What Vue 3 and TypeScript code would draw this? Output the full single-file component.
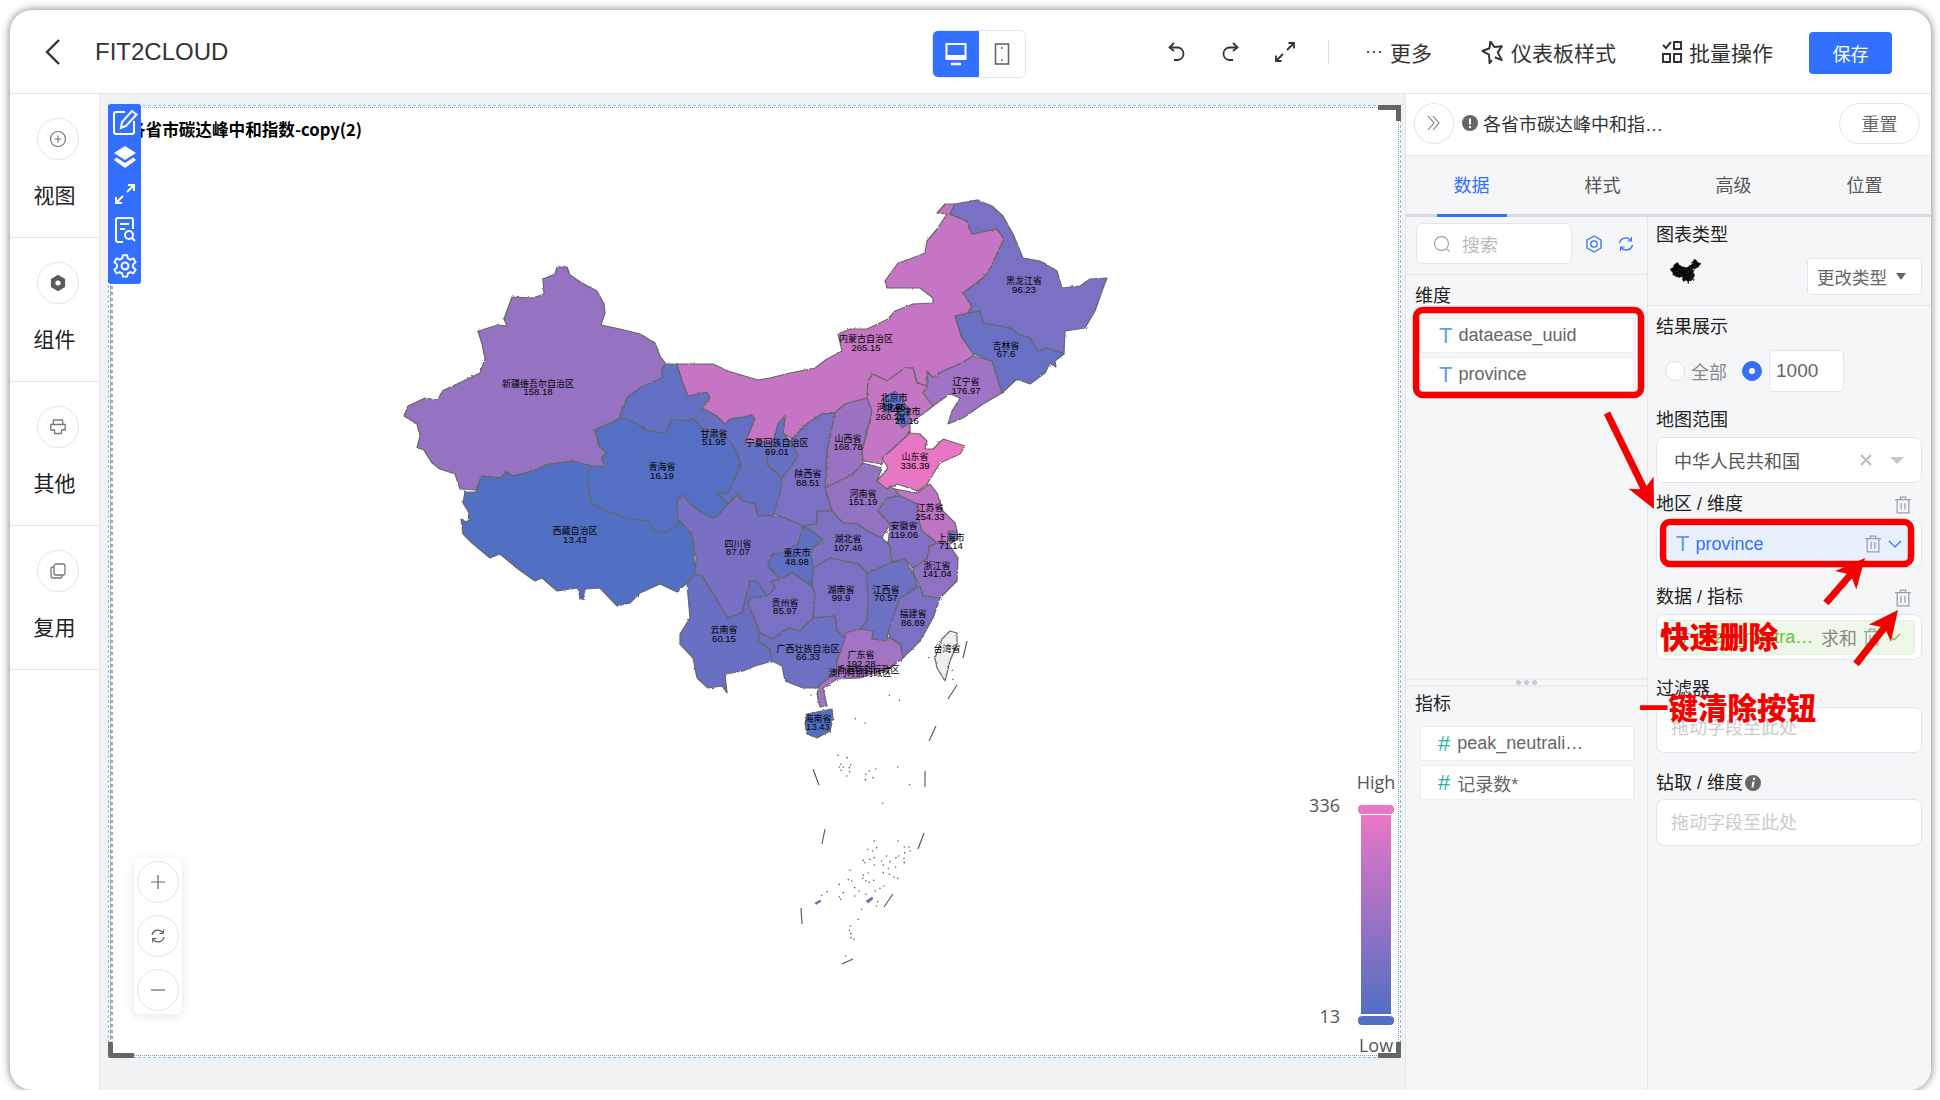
<template>
  <div class="window">
    <header class="topbar">
      <div class="topbar-left">
        <svg class="back" viewBox="0 0 16 26"><path d="M14 1 2 13l12 12" /></svg>
        <span class="app-title">FIT2CLOUD</span>
      </div>
      <div class="device-switch">
        <div class="device active">
          <svg width="24" height="24" viewBox="0 0 24 24" fill="none" stroke="#fff" stroke-width="2">
            <rect x="2.5" y="2" width="19" height="15" />
            <path d="M3 14.5h18" stroke-width="3" />
            <path d="M7 22h10" stroke-width="2.4" />
          </svg>
        </div>
        <div class="device">
          <svg width="18" height="24" viewBox="0 0 18 24" fill="none" stroke="#666" stroke-width="1.6">
            <rect x="2.5" y="2" width="13" height="20" />
            <circle cx="9" cy="6" r="1" fill="#666" stroke="none" />
            <circle cx="9" cy="18" r="1" fill="#666" stroke="none" />
          </svg>
        </div>
      </div>
      <svg class="tool first" viewBox="0 0 24 24"><path d="M9 3 4.5 7.5 9 11" /><path d="M5 7.5h8a6.3 6.3 0 0 1 0 12.5H9" /></svg>
      <svg class="tool" viewBox="0 0 24 24"><path d="M15 3l4.5 4.500L15 11" /><path d="M19 7.5h-8a6.3 6.3 0 0 0 0 12.5h4" /></svg>
      <svg class="tool wide" viewBox="0 0 24 24"><path d="M14 10 21 3M15.5 3H21v5.5M10 14l-7 7M8.5 21H3v-5.5" /></svg>
      <i class="top-divider"></i>
      <span class="action more"><b class="dots">···</b>更多</span>
      <span class="action style">
        <svg width="24" height="26" viewBox="0 0 24 26" fill="none" stroke="#333" stroke-width="2" stroke-linejoin="round">
          <g transform="rotate(-14 12 13)">
            <path d="M12 2l2.5 6.5L22 9.5l-5.5 5 2 8.5-6-4.5" />
            <path d="M9 20.5l-3 2.5 1.5-8.5L2 9.5l7.5-1L12 2" />
          </g>
        </svg>
        仪表板样式
      </span>
      <span class="action batch">
        <svg width="20" height="24" viewBox="0 0 20 24" fill="none" stroke="#333" stroke-width="2">
          <path d="M1 5l3 3 5-6" />
          <rect x="12" y="2" width="7" height="7" />
          <rect x="1" y="14" width="7" height="8" />
          <rect x="12" y="14" width="7" height="8" />
        </svg>
        批量操作
      </span>
      <button class="save">保存</button>
    </header>

    <div class="body">
      <aside class="sidebar">
        <div v-for="item in navItems" :key="item.key" class="nav-item">
          <div class="nav-circle">
            <svg v-if="item.key === 'view'" width="18" height="18" viewBox="0 0 18 18" fill="none" stroke="#777" stroke-width="1.2">
              <circle cx="9" cy="9" r="7.5" /><path d="M9 5.5v7M5.5 9h7" />
            </svg>
            <svg v-else-if="item.key === 'widget'" width="18" height="18" viewBox="0 0 18 18" fill="none" stroke="#5a5a5a" stroke-width="4.6">
              <path d="M9 3.5l4.800 2.750v5.500L9 14.500l-4.800-2.750v-5.500z" />
            </svg>
            <svg v-else-if="item.key === 'other'" width="18" height="18" viewBox="0 0 18 18" fill="none" stroke="#777" stroke-width="1.3" stroke-linejoin="round">
              <path d="M4 6.5 4.500 2h9l.5 4.500" />
              <path d="M1.800 6.500h14.400v5.500h-3.700v3.500h-7v-3.500H1.800z" />
            </svg>
            <svg v-else width="18" height="18" viewBox="0 0 18 18" fill="none" stroke="#777" stroke-width="1.3">
              <rect x="5" y="2" width="11" height="11" rx="2" />
              <path d="M5 5H4a2 2 0 0 0-2 2v7a2 2 0 0 0 2 2h7a2 2 0 0 0 2-2v-1" />
            </svg>
          </div>
          <span class="nav-label">{{ item.label }}</span>
        </div>
      </aside>

      <main class="canvas">
        <section class="chart">
          <div class="chart-title">各省市碳达峰中和指数-copy(2)</div>

          <svg class="map" viewBox="400 190 720 780" width="720" height="780">
            <filter id="rough" filterUnits="userSpaceOnUse" x="400" y="190" width="720" height="780">
              <feTurbulence type="fractalNoise" baseFrequency="0.3" numOctaves="2" seed="4" result="noise" />
              <feDisplacementMap in="SourceGraphic" in2="noise" scale="2.4" />
            </filter>
            <g filter="url(#rough)" stroke="#666" stroke-width="1.2" stroke-linejoin="round">
              <polygon v-for="p in provinces" :key="p.name" :points="p.pts" :fill="p.fill" />
            </g>
            <g stroke="#555" stroke-width="1.1" fill="none">
              <line v-for="(d, i) in dashes" :key="i" :x1="d[0]" :y1="d[1]" :x2="d[2]" :y2="d[3]" />
            </g>
            <circle v-for="(d, i) in dots" :key="'dot' + i" :cx="d[0]" :cy="d[1]" r="0.8" fill="#666" />
            <path d="M866 900l6-4 1 2-5 4zM815 902l5-3 1 1.500-5 3z" fill="#5a70c0" stroke="#666" stroke-width="0.5" />
            <g v-for="l in labels" :key="l.name" class="map-label">
              <text class="map-name" :x="l.x" :y="l.y + 3">{{ l.name }}</text>
              <text v-if="l.value" class="map-value" :x="l.x" :y="l.y2 + 3">{{ l.value }}</text>
            </g>
          </svg>

          <div class="toolbar">
            <svg width="26" height="28" viewBox="0 0 26 28" fill="none" stroke="#fff" stroke-width="2">
              <path d="M13 4H4a2 2 0 0 0-2 2v18a2 2 0 0 0 2 2h16a2 2 0 0 0 2-2V13" />
              <path d="M9 20l1-6L20 3l4.500 3.500L14 18z" />
            </svg>
            <svg width="26" height="26" viewBox="0 0 26 26" fill="#fff">
              <path d="M13 1l11 7-11 7L2 8z" />
              <path d="M4.500 12.500 13 18l8.500-5.500L24 15l-11 8L2 15z" />
            </svg>
            <svg width="24" height="24" viewBox="0 0 24 24" fill="none" stroke="#fff" stroke-width="2">
              <path d="M14 10l7-7M15 3h6v6M10 14l-7 7M3 15v6h6" />
            </svg>
            <svg width="24" height="28" viewBox="0 0 24 28" fill="none" stroke="#fff" stroke-width="2">
              <path d="M10 26H5a2 2 0 0 1-2-2V4a2 2 0 0 1 2-2h13a2 2 0 0 1 2 2v9" />
              <path d="M7 8h9M7 13h5" />
              <circle cx="16" cy="19" r="4" /><path d="M19 22l3 3" />
            </svg>
            <svg width="26" height="28" viewBox="0 0 24 24" fill="none" stroke="#fff" stroke-width="1.8" stroke-linejoin="round">
              <circle cx="12" cy="12" r="3.2" />
              <path d="M10 2h4l.6 3 2.400 1.200 2.800-1.200 2 3.500-2.300 2v2.800l2.300 2-2 3.500-2.800-1.200-2.400 1.200-.6 3h-4l-.6-3L7 17.600l-2.800 1.200-2-3.500 2.300-2v-2.800l-2.300-2 2-3.500L7 6.200 9.400 5z" />
            </svg>
          </div>

          <i class="corner tr"></i>
          <i class="corner bl"></i>
          <i class="corner br"></i>

          <div class="zoom-box">
            <span class="zoom-btn">
              <svg width="16" height="16" viewBox="0 0 16 16" stroke="#666" stroke-width="1.2"><path d="M8 1v14M1 8h14" /></svg>
            </span>
            <span class="zoom-btn">
              <svg width="16" height="16" viewBox="0 0 16 16" fill="none" stroke="#666" stroke-width="1.3">
                <path d="M2 7a6 6 0 0 1 11-2M14 9a6 6 0 0 1-11 2" />
                <path d="M13.5 1.5V5.5H9.5M2.5 14.5V10.5H6.5" stroke-width="1" />
              </svg>
            </span>
            <span class="zoom-btn">
              <svg width="16" height="16" viewBox="0 0 16 16" stroke="#666" stroke-width="1.2"><path d="M1 8h14" /></svg>
            </span>
          </div>

          <div class="legend">
            <span class="legend-cap">High</span>
            <div class="legend-main">
              <div class="legend-values"><span>336</span><span>13</span></div>
              <div class="legend-bar">
                <i class="handle top"></i>
                <i class="ramp"></i>
                <i class="handle bottom"></i>
              </div>
            </div>
            <span class="legend-cap low">Low</span>
          </div>
        </section>
      </main>

      <aside class="panel">
        <div class="panel-head">
          <span class="collapse">
            <svg width="16" height="18" viewBox="0 0 16 18" fill="none" stroke="#777" stroke-width="1.1"><path d="M2 2l6 7-6 7M7 2l6 7-6 7" /></svg>
          </span>
          <svg class="warn" width="16" height="16" viewBox="0 0 16 16">
            <circle cx="8" cy="8" r="8" fill="#666" /><path d="M8 3.5v6" stroke="#fff" stroke-width="2" /><circle cx="8" cy="12" r="1.2" fill="#fff" />
          </svg>
          <span class="panel-title">各省市碳达峰中和指…</span>
          <button class="reset">重置</button>
        </div>

        <nav class="tabs">
          <span v-for="(t, i) in tabs" :key="t" class="tab" :class="{ active: i === 0 }">{{ t }}</span>
        </nav>

        <div class="panel-cols">
          <div class="col-fields">
            <div class="fields-upper">
              <div class="search-row">
                <div class="search">
                  <svg width="18" height="18" viewBox="0 0 18 18" fill="none" stroke="#aaa" stroke-width="1.3"><circle cx="8.5" cy="8.5" r="7" /><path d="M13.5 13.5l3 3" /></svg>
                  <span>搜索</span>
                </div>
                <svg class="search-gear" width="18" height="18" viewBox="0 0 18 18" fill="none" stroke="#3370ff" stroke-width="1.3">
                  <path d="M9 1l7 4v8l-7 4-7-4V5z" stroke-linejoin="round" /><circle cx="9" cy="9" r="3.2" />
                </svg>
                <svg class="search-sync" width="16" height="16" viewBox="0 0 16 16" fill="none" stroke="#3370ff" stroke-width="1.4">
                  <path d="M1.5 7a6.5 6.5 0 0 1 11.5-2.5M14.5 9A6.5 6.5 0 0 1 3 11.5" />
                  <path d="M13.5 1v4h-4M2.5 15v-4h4" stroke-width="1.1" />
                </svg>
              </div>
              <div class="col-label">维度</div>
              <div class="field-list">
                <div v-for="f in dimensions" :key="f" class="field"><em class="type-t">T</em>{{ f }}</div>
              </div>
            </div>
            <div class="splitter"><i></i><i></i><i></i></div>
            <div class="col-label measure-label">指标</div>
            <div class="field-list">
              <div v-for="f in measures" :key="f" class="field"><em class="type-n">#</em>{{ f }}</div>
            </div>
          </div>

          <div class="col-config">
            <div class="config-top">
              <div class="cfg-label">图表类型</div>
              <div class="chart-type">
                <svg class="mini-map" width="31" height="25" viewBox="400 190 710 555" preserveAspectRatio="none">
                  <polygon v-for="p in provinces" :key="p.name" :points="p.pts" fill="#000" stroke="#000" stroke-width="6" />
                </svg>
                <div class="type-select">更改类型<i class="caret"></i></div>
              </div>
            </div>

            <div class="config-rest">
              <div class="cfg-label">结果展示</div>
              <div class="result-row">
                <i class="radio"></i><span class="radio-text">全部</span>
                <i class="radio on"></i>
                <div class="num-input">1000</div>
              </div>

              <div class="cfg-label l-range">地图范围</div>
              <div class="range-select">
                <span>中华人民共和国</span>
                <svg width="12" height="12" viewBox="0 0 12 12" stroke="#bbb" stroke-width="2"><path d="M1 1l10 10M11 1 1 11" /></svg>
                <i class="caret light"></i>
              </div>

              <div class="cfg-label l-region">地区 / 维度<TrashIcon class="label-trash" /></div>
              <div class="drop drop-region">
                <div class="chip chip-blue">
                  <em class="type-t">T</em><span class="chip-text">province</span>
                  <TrashIcon />
                  <svg class="chev" width="14" height="8" viewBox="0 0 14 8" fill="none" stroke="#3370ff" stroke-width="1.2"><path d="M1 1l6 6 6-6" /></svg>
                </div>
              </div>

              <div class="cfg-label l-measure">数据 / 指标<TrashIcon class="label-trash" /></div>
              <div class="drop drop-measure">
                <div class="chip chip-green">
                  <em class="type-n">#</em><span class="chip-text">peak_neutra…</span>
                  <span class="agg">求和</span>
                  <TrashIcon />
                  <svg class="chev" width="14" height="8" viewBox="0 0 14 8" fill="none" stroke="#67c23a" stroke-width="1.2"><path d="M1 1l6 6 6-6" /></svg>
                </div>
              </div>

              <div class="cfg-label l-filter">过滤器</div>
              <div class="drop drop-empty"><span>拖动字段至此处</span></div>

              <div class="cfg-label l-drill">钻取 / 维度
                <svg class="info" width="16" height="16" viewBox="0 0 16 16"><circle cx="8" cy="8" r="8" fill="#666" /><path d="M8.6 6.5 7.4 12.5" stroke="#fff" stroke-width="2" /><circle cx="9" cy="3.8" r="1.2" fill="#fff" /></svg>
              </div>
              <div class="drop drop-empty drill-box"><span>拖动字段至此处</span></div>
            </div>
          </div>
        </div>
      </aside>
    </div>

    <svg class="notes" width="1940" height="1100" viewBox="0 0 1940 1100">
      <rect x="1416" y="310" width="225" height="85" rx="7" />
      <rect x="1663" y="522" width="248" height="42" rx="7" />
      <polygon v-for="(a, i) in arrows" :key="i" :points="a" />
      <text x="1660" y="648">快速删除</text>
      <text x="1639" y="719">一键清除按钮</text>
    </svg>
  </div>
</template>

<script setup lang="ts">
import { h } from 'vue'

interface Province {
  name: string
  fill: string
  pts: string
}

interface MapLabel {
  name: string
  value?: string
  x: number
  y: number
  y2: number
}

// small shared trash icon
const TrashIcon = () =>
  h(
    'svg',
    { class: 'trash', width: 16, height: 18, viewBox: '0 0 15 17', fill: 'none', stroke: '#9a9ea8', 'stroke-width': 1.2 },
    [h('path', { d: 'M0 3.5h15M5 3.5V1h5v2.5M2 3.5V16h11V3.5M5.7 6.5v6.5M9.3 6.5v6.5' })]
  )

const navItems = [
  { key: 'view', label: '视图' },
  { key: 'widget', label: '组件' },
  { key: 'other', label: '其他' },
  { key: 'reuse', label: '复用' }
]

const tabs = ['数据', '样式', '高级', '位置']
const dimensions = ['dataease_uuid', 'province']
const measures = ['peak_neutrali…', '记录数*']

// outlines traced off the reference, in page pixels
const provinces: Province[] = [
  { name: '新疆', fill: '#9672c2', pts: '404,415 408,405 425,397 438,399 442,390 457,383 480,372 485,358 482,343 478,330 498,324 507,325 504,318 512,296 533,297 544,293 543,278 555,273 557,266 567,266 570,274 582,282 597,290 604,303 605,312 601,324 620,328 640,333 655,342 660,355 666,363 662,368 662,377 640,387 627,397 619,418 595,429 599,445 607,452 602,455 604,465 587,466 573,460 550,463 533,470 513,475 507,471 500,477 482,475 476,489 460,488 455,473 440,468 432,462 423,448 417,447 420,435 417,423' },
  { name: '西藏', fill: '#516fc4', pts: '476,491 465,491 463,502 469,512 468,521 461,518 463,533 472,542 490,557 500,553 518,568 535,580 542,577 557,590 578,587 580,598 583,598 585,588 600,587 617,605 630,602 640,592 660,583 677,591 687,582 695,572 693,538 687,522 678,518 677,525 663,532 655,530 648,520 630,518 607,510 592,503 587,478 591,465 573,460 550,463 533,470 513,475 507,471 500,477 482,475' },
  { name: '甘肃', fill: '#6470c4', pts: '666,363 677,363 682,380 688,395 707,391 710,397 702,407 717,415 725,423 730,418 752,414 755,418 745,442 772,441 768,452 767,463 782,477 780,492 773,515 758,515 755,503 742,500 738,493 728,503 717,492 728,492 733,482 741,463 735,448 728,438 713,432 702,427 693,418 687,420 672,418 665,432 647,430 642,425 627,418 619,418 627,397 640,387 662,377 662,368' },
  { name: '青海', fill: '#5270c4', pts: '595,429 619,418 627,418 642,425 647,430 665,432 672,418 687,420 693,418 702,427 713,432 728,438 735,448 741,463 733,482 728,492 717,492 728,503 723,508 715,518 702,512 690,503 683,494 677,500 679,513 677,525 663,532 655,530 648,520 630,518 607,510 592,503 587,478 591,465 604,465 602,455 607,452 599,445' },
  { name: '内蒙古', fill: '#c674c4', pts: '677,363 713,363 728,370 758,379 770,377 790,372 815,367 827,358 842,350 838,333 850,328 867,328 888,318 895,310 913,303 933,302 933,297 920,287 887,287 885,280 898,262 910,258 925,252 927,240 937,228 947,213 937,212 945,203 955,203 950,213 967,220 972,233 997,228 1004,238 997,253 990,268 983,277 963,292 972,305 968,312 955,315 962,337 973,352 973,355 960,363 943,370 933,377 927,370 927,385 917,382 913,367 905,367 887,380 873,373 868,380 867,397 845,403 835,412 822,413 808,422 792,438 783,432 785,415 778,423 775,436 772,441 745,442 755,418 752,414 730,418 725,423 717,415 702,407 710,397 707,391 688,395 682,380' },
  { name: '黑龙江', fill: '#7971c4', pts: '955,203 977,199 992,205 1003,215 1013,233 1023,257 1040,260 1057,270 1062,287 1080,285 1090,278 1107,277 1102,290 1095,310 1085,327 1065,330 1064,353 1047,347 1038,350 1030,337 1018,333 1010,327 983,322 980,310 968,312 972,305 963,292 983,277 990,268 997,253 1004,238 997,228 972,233 967,220 950,213' },
  { name: '吉林', fill: '#6771c4', pts: '955,315 968,312 980,310 983,322 1010,327 1018,333 1030,337 1038,350 1047,347 1064,353 1055,360 1056,366 1050,362 1045,372 1030,383 1017,378 1002,392 992,360 973,353 973,352 962,337' },
  { name: '辽宁', fill: '#a173c4', pts: '973,355 992,360 1002,392 983,403 963,417 948,423 952,410 960,397 950,393 933,405 923,392 928,382 927,370 933,377 943,370 960,363' },
  { name: '河北', fill: '#c474c3', pts: '868,380 873,373 887,380 905,367 913,367 917,382 927,385 923,392 933,405 927,410 910,422 910,432 887,453 882,463 863,460 862,450 872,410 867,397' },
  { name: '北京天津', fill: '#5f70c4', pts: '883,397 895,390 902,397 905,403 910,410 908,423 902,427 897,420 898,410 885,412' },
  { name: '山西', fill: '#9b72c2', pts: '867,397 872,410 862,450 863,460 860,473 825,487 827,450 835,412 845,403' },
  { name: '陕西', fill: '#7871c4', pts: '835,412 827,450 825,487 827,493 832,510 817,510 817,523 803,525 775,513 773,515 780,492 782,477 790,467 798,455 790,440 792,438 808,422 822,413' },
  { name: '宁夏', fill: '#6670c4', pts: '772,441 775,436 778,423 785,415 783,432 790,440 798,455 790,467 782,477 767,463 768,452' },
  { name: '河南', fill: '#9472c2', pts: '825,487 853,473 863,462 882,467 877,480 895,488 900,495 887,497 878,510 890,523 882,537 867,530 858,523 843,522 832,510 827,493' },
  { name: '山东', fill: '#e976c5', pts: '910,432 920,433 927,440 925,448 933,448 943,438 965,445 960,453 940,462 927,483 918,490 897,483 887,488 877,480 888,467 882,457 887,453' },
  { name: '江苏', fill: '#bd74c4', pts: '895,488 917,492 930,483 937,492 943,510 955,522 957,530 948,535 948,542 937,542 922,530 918,517 917,503 900,495' },
  { name: '上海', fill: '#6d71c4', pts: '948,530 957,530 958,538 950,543' },
  { name: '安徽', fill: '#8371c3', pts: '900,495 917,503 918,517 922,530 937,542 930,545 927,558 913,567 905,558 892,561 888,545 890,523 878,510 887,497' },
  { name: '浙江', fill: '#8f72c3', pts: '937,542 948,542 958,557 957,580 940,597 923,595 920,585 913,572 913,567 927,558 930,545' },
  { name: '福建', fill: '#7a71c4', pts: '923,595 940,597 933,617 920,640 903,657 900,643 890,637 888,630 900,597 918,585 920,585' },
  { name: '江西', fill: '#6d71c4', pts: '867,572 892,561 905,558 913,572 918,585 900,597 888,630 887,640 872,638 873,630 860,628 867,620 868,603 863,590' },
  { name: '湖北', fill: '#7d71c4', pts: '817,510 832,510 843,522 858,523 867,530 882,537 890,545 892,561 867,572 858,563 830,557 813,567 800,547 823,542 813,530 803,525 817,523' },
  { name: '四川', fill: '#7870c4', pts: '677,500 683,494 690,503 702,512 715,518 728,503 738,493 742,500 755,503 758,515 773,515 780,515 803,525 798,543 783,552 772,553 768,565 780,578 772,580 775,587 767,595 757,580 750,580 742,612 728,617 702,575 695,573 696,557 692,533 678,518' },
  { name: '重庆', fill: '#5e70c4', pts: '803,525 823,538 810,550 813,563 812,585 792,572 780,578 768,565 772,553 783,552 798,543' },
  { name: '云南', fill: '#6970c4', pts: '687,583 695,573 702,575 728,617 742,612 750,580 757,580 767,595 750,597 748,603 760,627 758,640 770,648 772,660 755,665 743,670 725,673 727,692 722,685 708,687 697,677 693,657 680,643 680,633 690,617' },
  { name: '贵州', fill: '#7871c4', pts: '767,595 775,587 772,580 780,578 792,572 812,585 815,593 813,617 800,630 788,627 773,638 760,632 758,627 748,603 750,597' },
  { name: '湖南', fill: '#7a71c4', pts: '813,567 830,557 858,563 867,572 868,603 867,620 860,628 845,632 845,637 837,630 835,615 813,617 815,593 812,585' },
  { name: '广西', fill: '#6d71c4', pts: '760,632 773,638 788,627 800,630 813,617 835,615 837,630 845,637 837,660 837,672 817,687 803,687 785,680 782,665 772,660 770,648 758,640' },
  { name: '广东', fill: '#a373c4', pts: '845,632 860,628 873,630 872,638 887,640 890,637 900,643 903,657 890,667 860,677 837,678 823,687 827,705 820,706 817,693 820,683 837,672 837,660 845,637' },
  { name: '海南', fill: '#516fc4', pts: '807,713 832,708 833,717 830,730 817,737 807,733 805,723' },
  { name: '台湾', fill: '#eeeeee', pts: '950,630 957,632 957,643 950,660 945,680 937,667 935,657 942,638' }
]

const labels: MapLabel[] = [
  { name: '新疆维吾尔自治区', value: '158.18', x: 538, y: 383, y2: 391 },
  { name: '西藏自治区', value: '13.43', x: 575, y: 530, y2: 539 },
  { name: '青海省', value: '16.19', x: 662, y: 466, y2: 475 },
  { name: '甘肃省', value: '51.95', x: 714, y: 433, y2: 441 },
  { name: '宁夏回族自治区', value: '69.01', x: 777, y: 442, y2: 451 },
  { name: '内蒙古自治区', value: '265.15', x: 866, y: 338, y2: 347 },
  { name: '黑龙江省', value: '96.23', x: 1024, y: 280, y2: 289 },
  { name: '吉林省', value: '67.6', x: 1006, y: 345, y2: 353 },
  { name: '辽宁省', value: '176.97', x: 966, y: 381, y2: 390 },
  { name: '北京市', value: '89.85', x: 894, y: 397, y2: 406 },
  { name: '河北省', value: '260.28', x: 890, y: 407, y2: 416 },
  { name: '天津市', value: '28.16', x: 907, y: 411, y2: 420 },
  { name: '山西省', value: '168.78', x: 848, y: 438, y2: 446 },
  { name: '山东省', value: '336.39', x: 915, y: 456, y2: 465 },
  { name: '陕西省', value: '88.51', x: 808, y: 473, y2: 482 },
  { name: '河南省', value: '151.19', x: 863, y: 493, y2: 501 },
  { name: '江苏省', value: '254.33', x: 930, y: 507, y2: 516 },
  { name: '安徽省', value: '119.06', x: 904, y: 525, y2: 534 },
  { name: '上海市', value: '71.14', x: 951, y: 537, y2: 545 },
  { name: '湖北省', value: '107.46', x: 848, y: 538, y2: 547 },
  { name: '四川省', value: '87.07', x: 738, y: 543, y2: 551 },
  { name: '重庆市', value: '48.98', x: 797, y: 552, y2: 561 },
  { name: '浙江省', value: '141.04', x: 937, y: 565, y2: 573 },
  { name: '湖南省', value: '99.9', x: 841, y: 589, y2: 597 },
  { name: '江西省', value: '70.57', x: 886, y: 589, y2: 597 },
  { name: '贵州省', value: '85.97', x: 785, y: 602, y2: 610 },
  { name: '福建省', value: '86.89', x: 913, y: 613, y2: 622 },
  { name: '云南省', value: '60.15', x: 724, y: 629, y2: 638 },
  { name: '台湾省', x: 947, y: 648, y2: 648 },
  { name: '广西壮族自治区', value: '66.33', x: 808, y: 648, y2: 656 },
  { name: '广东省', value: '192.28', x: 861, y: 654, y2: 663 },
  { name: '香港特别行政区', x: 868, y: 669, y2: 669 },
  { name: '澳门特别行政区', x: 860, y: 672, y2: 672 },
  { name: '海南省', value: '13.43', x: 818, y: 718, y2: 726 }
]

const dashes: number[][] = [
  [963, 657, 967, 640],
  [948, 698, 957, 684],
  [929, 740, 936, 725],
  [925, 770, 925, 786],
  [918, 848, 924, 832],
  [884, 906, 893, 893],
  [842, 963, 853, 958],
  [801, 907, 802, 923],
  [822, 843, 825, 828],
  [813, 768, 819, 784]
]

// South China Sea islets, read off a crop at 3x with its origin at (780, 640)
const dotsRaw = [
  174, 343, 201, 350, 183, 370, 178, 378, 190, 378, 183, 388, 212, 372, 208, 380, 209, 392, 200, 405, 268, 390, 287, 384, 258, 400, 256, 416, 279, 410, 353, 378, 389, 431,
  308, 487, 283, 600, 278, 630, 290, 620, 263, 625, 354, 600, 373, 618, 387, 618, 374, 635, 390, 630, 348, 650, 356, 645, 320, 645, 250, 658, 270, 655, 255, 665, 283, 650,
  305, 660, 330, 662, 310, 672, 372, 652, 373, 665, 283, 672, 347, 678, 325, 682, 210, 688, 265, 696, 250, 703, 310, 695, 328, 700, 342, 708, 353, 712, 248, 712, 258, 720,
  268, 724, 281, 718, 205, 716, 215, 720, 178, 730, 224, 740, 237, 750, 141, 752, 125, 763, 190, 755, 178, 768, 182, 775, 225, 765, 285, 750, 300, 742, 312, 735, 258, 760,
  293, 782, 290, 795, 245, 805, 234, 835, 211, 855, 208, 868, 213, 878, 213, 890, 222, 895, 197, 945, 328, 163, 358, 178, 226, 233, 255, 246, 93, 162, 447, 50, 517, 88, 519, 115
]
const dots: number[][] = []
for (let i = 0; i < dotsRaw.length; i += 2) {
  dots.push([780 + dotsRaw[i] / 3, 640 + dotsRaw[i + 1] / 3])
}

function arrow(x1: number, y1: number, x2: number, y2: number, stem = 3.5, head = 28, wing = 14): string {
  const len = Math.hypot(x2 - x1, y2 - y1)
  const ux = (x2 - x1) / len
  const uy = (y2 - y1) / len
  const nx = -uy
  const ny = ux
  const neck = len - head * 0.85
  const barb = len - head * 1.05
  const pt = (along: number, side: number) => `${x1 + ux * along + nx * side},${y1 + uy * along + ny * side}`
  return [pt(0, stem), pt(neck, stem), pt(barb, wing), pt(len, 0), pt(barb, -wing), pt(neck, -stem), pt(0, -stem)].join(' ')
}

const arrows = [arrow(1607, 413, 1654, 509), arrow(1826, 603, 1865, 558), arrow(1856, 664, 1898, 610)]
</script>

<style scoped>
.window {
  position: relative;
  width: 1921px;
  height: 1080px;
  margin: 10px 0 0 10px;
  background: #fff;
  border-radius: 22px;
  box-shadow: 0 0 9px rgba(0, 0, 0, 0.55);
  overflow: hidden;
  font-family: "Liberation Sans", "Noto Sans CJK SC", sans-serif;
  color: #333;
}

.topbar {
  height: 83px;
  display: flex;
  align-items: center;
  border-bottom: 1px solid #e4e6ea;
  box-sizing: content-box;
}

.topbar-left {
  width: 922px;
  display: flex;
  align-items: center;
}

.back {
  width: 16px;
  height: 26px;
  margin-left: 35px;
  fill: none;
  stroke: #333;
  stroke-width: 2.4;
}

.app-title {
  margin-left: 34px;
  font-size: 24px;
}

.device-switch {
  display: flex;
  width: 94px;
  height: 48px;
  margin-top: 5px;
  border: 1px solid #e4e6ef;
  border-radius: 6px;
  box-sizing: border-box;
  overflow: hidden;
}

.device {
  flex: 1;
  display: flex;
  align-items: center;
  justify-content: center;
}

.device.active {
  background: #3370ff;
}

.tool {
  width: 24px;
  height: 24px;
  margin-left: 29px;
  fill: none;
  stroke: #333;
  stroke-width: 1.8;
}

.tool.first {
  margin-left: 139px;
}

.tool.wide {
  margin-left: 31px;
}

.top-divider {
  width: 1px;
  height: 24px;
  margin-left: 31px;
  background: #d8dade;
}

.action {
  display: flex;
  align-items: center;
  font-size: 21px;
  white-space: nowrap;
}

.more {
  margin-left: 36px;
}

.dots {
  width: 25px;
  font-weight: 400;
  font-size: 18px;
}

.style {
  margin-left: 49px;
  gap: 6px;
}

.batch {
  margin-left: 46px;
  gap: 7px;
}

.save {
  width: 83px;
  height: 42px;
  margin: 3px 0 0 36px;
  background: #3370ff;
  color: #fff;
  border: none;
  border-radius: 4px;
  font: inherit;
  font-size: 18px;
}

.body {
  display: flex;
  height: 996px;
}

.sidebar {
  width: 90px;
  flex: none;
  border-right: 1px solid #e4e6ea;
  box-sizing: border-box;
}

.nav-item {
  height: 144px;
  display: flex;
  flex-direction: column;
  align-items: center;
  border-bottom: 1px solid #e4e6ea;
  box-sizing: border-box;
}

.nav-circle {
  width: 42px;
  height: 42px;
  margin: 24px 0 0 6px;
  flex: none;
  display: flex;
  align-items: center;
  justify-content: center;
  border: 1px solid #e4e4ee;
  border-radius: 50%;
  box-sizing: border-box;
}

.nav-label {
  margin-top: 21px;
  font-size: 21px;
  line-height: 30px;
  color: #222;
}

.canvas {
  flex: 1;
  display: flex;
  padding: 11px 4px 32px 8px;
  background: #f1f2f4;
  min-width: 0;
}

.chart {
  position: relative;
  flex: 1;
  background: #fff;
  border: 1px dashed #7cc0ee;
  outline: 1px dotted #999;
  outline-offset: -3px;
}

.chart::before {
  content: "";
  position: absolute;
  left: 1px;
  top: 0;
  bottom: 0;
  border-left: 3px dotted #aaa;
}

.chart-title {
  position: absolute;
  left: 20px;
  top: 12px;
  font-family: "Noto Sans CJK SC", sans-serif;
  font-size: 16.6px;
  line-height: 22px;
  font-weight: 700;
  color: #000;
  white-space: nowrap;
}

.map {
  position: absolute;
  left: 291px;
  top: 85px;
}

.map-name,
.map-value {
  text-anchor: middle;
  font-size: 9px;
  fill: #000;
}

.map-name {
  font-family: "Noto Sans CJK SC", sans-serif;
}

.map-value {
  font-family: "Liberation Sans", sans-serif;
  font-size: 9.5px;
}

.toolbar {
  position: absolute;
  left: -1px;
  top: -2px;
  width: 33px;
  height: 180px;
  display: grid;
  grid-auto-rows: 36px;
  place-items: center;
  background: #3370ff;
  border-radius: 3px;
}

.corner {
  position: absolute;
  width: 18px;
  height: 11px;
  border: 0 solid #666;
}

.corner.tr {
  right: -1px;
  top: -1px;
  border-top-width: 5px;
  border-right-width: 5px;
}

.corner.bl {
  left: -1px;
  bottom: -1px;
  width: 21px;
  border-bottom-width: 5px;
  border-left-width: 5px;
  border-bottom-left-radius: 4px;
}

.corner.br {
  right: -1px;
  bottom: -1px;
  border-bottom-width: 5px;
  border-right-width: 5px;
  border-bottom-right-radius: 2px;
}

.zoom-box {
  position: absolute;
  left: 25px;
  top: 752px;
  width: 48px;
  height: 156px;
  padding: 3px 0;
  box-sizing: border-box;
  display: flex;
  flex-direction: column;
  align-items: center;
  justify-content: space-between;
  background: #fff;
  border-radius: 6px;
  box-shadow: 0 2px 12px rgba(0, 0, 0, 0.1);
}

.zoom-btn {
  width: 42px;
  height: 42px;
  display: flex;
  align-items: center;
  justify-content: center;
  border: 1px solid #e4e4ee;
  border-radius: 50%;
  box-sizing: border-box;
}

.legend {
  position: absolute;
  right: 6px;
  top: 664px;
  width: 80px;
  height: 282px;
  font-family: "Open Sans", sans-serif;
  font-size: 18px;
  color: #555;
  display: flex;
  flex-direction: column;
  align-items: flex-end;
}

.legend-cap {
  width: 36px;
  height: 24px;
  line-height: 24px;
  text-align: center;
  white-space: nowrap;
  display: flex;
  justify-content: center;
}

.legend-main {
  display: flex;
  margin-top: 11px;
}

.legend-values {
  display: flex;
  flex-direction: column;
  justify-content: space-between;
  align-items: flex-end;
  margin-right: 18px;
  height: 235px;
  line-height: 24px;
  margin-top: -12px;
  width: 41px;
}

.legend-bar {
  width: 36px;
  display: flex;
  flex-direction: column;
  align-items: center;
}

.handle {
  width: 36px;
  height: 9px;
  border-radius: 4px;
  flex: none;
}

.handle.top {
  background: #e976c5;
}

.handle.bottom {
  background: #516fc4;
}

.ramp {
  display: block;
  width: 30px;
  height: 199px;
  margin: 1px 0 2px;
  background: linear-gradient(#e976c5, #516fc4);
}

.legend-cap.low {
  margin-top: 5px;
}

.panel {
  width: 526px;
  flex: none;
  background: #f5f6f8;
  border-left: 1px solid #e4e6ea;
  box-sizing: border-box;
  display: flex;
  flex-direction: column;
}

.panel-head {
  height: 62px;
  flex: none;
  display: flex;
  align-items: center;
  padding-bottom: 3px;
  background: #fff;
  border-bottom: 1px solid #e4e6ea;
  box-sizing: border-box;
}

.collapse {
  width: 40px;
  height: 41px;
  margin-left: 8px;
  display: flex;
  align-items: center;
  justify-content: center;
  border: 1px solid #e4e4ee;
  border-radius: 50%;
  box-sizing: border-box;
}

.warn {
  margin-left: 8px;
}

.panel-title {
  margin-left: 5px;
  font-size: 18px;
  color: #333;
}

.reset {
  width: 81px;
  height: 41px;
  margin-left: auto;
  margin-right: 11px;
  background: #fff;
  border: 1px solid #e4e4ee;
  border-radius: 21px;
  font: inherit;
  font-size: 18px;
  color: #666;
}

.tabs {
  height: 61px;
  flex: none;
  display: flex;
  border-bottom: 3px solid #d8dadf;
  box-sizing: border-box;
}

.tab {
  width: 131px;
  height: 61px;
  line-height: 60px;
  text-align: center;
  font-size: 18px;
  color: #555;
  box-sizing: border-box;
}

.tab.active {
  color: #3370ff;
  position: relative;
}

.tab.active::after {
  content: "";
  position: absolute;
  left: 31px;
  right: 30px;
  bottom: 0;
  height: 3px;
  background: #3370ff;
}

.panel-cols {
  flex: 1;
  display: flex;
  min-height: 0;
}

.col-fields {
  width: 241px;
  flex: none;
}

.fields-upper {
  height: 461px;
}

.search-row {
  height: 58px;
  padding: 6px 0 0 10px;
  display: flex;
  align-items: flex-start;
  border-bottom: 1px solid #e4e6ea;
  box-sizing: border-box;
}

.search {
  width: 156px;
  height: 41px;
  display: flex;
  align-items: center;
  gap: 11px;
  padding-left: 16px;
  background: #fff;
  border: 1px solid #e4e4ee;
  border-radius: 6px;
  box-sizing: border-box;
  font-size: 18px;
  color: #bbb;
}

.search-gear {
  margin: 12px 0 0 13px;
}

.search-sync {
  margin: 13px 0 0 15px;
}

.col-label {
  height: 26px;
  margin-top: 8px;
  padding-left: 9px;
  font-size: 18px;
  line-height: 26px;
  color: #222;
}

.measure-label {
  margin-top: 4px;
}

.field-list {
  display: flex;
  flex-direction: column;
  gap: 4px;
  margin: 9px 0 0 14px;
  width: 214px;
}

.field {
  height: 35px;
  display: flex;
  align-items: center;
  background: #fff;
  border: 1px solid #eceef0;
  box-sizing: border-box;
  font-size: 18px;
  color: #666;
  white-space: nowrap;
}

.field em,
.chip em {
  font-style: normal;
  font-size: 22px;
}

.field .type-t {
  margin-left: 18px;
  margin-right: 6px;
}

.field .type-n {
  margin-left: 17px;
  margin-right: 7px;
}

.type-t {
  color: #6a9ae0;
}

.type-n {
  color: #2bb5a0;
}

.splitter {
  height: 9px;
  display: flex;
  align-items: center;
  justify-content: center;
  gap: 3px;
  background: linear-gradient(#ebecee 2px, transparent 2px, transparent 7px, #ebecee 7px);
}

.splitter i {
  width: 5px;
  height: 5px;
  border-radius: 50%;
  background: #c8cacf;
}

.col-config {
  flex: 1;
  border-left: 1px solid #e4e6ea;
  box-sizing: border-box;
  min-width: 0;
}

.config-top {
  height: 89px;
  padding: 5px 9px 0 8px;
  border-bottom: 1px solid #e4e6ea;
  box-sizing: border-box;
}

.config-rest {
  padding: 8px 9px 0 8px;
}

.cfg-label {
  position: relative;
  height: 26px;
  font-size: 18px;
  line-height: 26px;
  color: #222;
  display: flex;
  align-items: center;
  white-space: pre;
}

.chart-type {
  display: flex;
  align-items: flex-start;
  justify-content: space-between;
  margin-top: 10px;
}

.mini-map {
  margin: 1px 0 0 14px;
}

.type-select {
  width: 115px;
  height: 37px;
  display: flex;
  align-items: center;
  padding-left: 9px;
  gap: 9px;
  background: #fff;
  border: 1px solid #e4e4ee;
  border-radius: 4px;
  box-sizing: border-box;
  font-size: 17.5px;
  color: #666;
  white-space: nowrap;
}

.caret {
  width: 0;
  height: 0;
  border: 5px solid transparent;
  border-top: 7px solid #666;
  border-bottom: 0;
}

.caret.light {
  border-width: 7px 7px 0;
  border-top-color: #c8c8c8;
}

.result-row {
  display: flex;
  align-items: center;
  height: 42px;
  margin-top: 10px;
  padding-left: 9px;
}

.radio {
  width: 20px;
  height: 20px;
  flex: none;
  background: #fff;
  border: 1px solid #dcdfe6;
  border-radius: 50%;
  box-sizing: border-box;
}

.radio.on {
  margin-left: 15px;
  background: #3370ff;
  border-color: #3370ff;
  position: relative;
}

.radio.on::after {
  content: "";
  position: absolute;
  left: 6px;
  top: 6px;
  width: 6px;
  height: 6px;
  border-radius: 50%;
  background: #fff;
}

.radio-text {
  margin-left: 6px;
  font-size: 18px;
  color: #888;
}

.num-input {
  width: 75px;
  height: 42px;
  margin-left: 7px;
  padding-left: 6px;
  line-height: 40px;
  background: #fff;
  border: 1px solid #e4e4ee;
  border-radius: 4px;
  box-sizing: border-box;
  font-size: 19px;
  color: #666;
}

.l-range {
  margin-top: 15px;
}

.range-select {
  height: 46px;
  margin-top: 4px;
  display: flex;
  align-items: center;
  padding-left: 17px;
  background: #fff;
  border: 1px solid #e4e4ee;
  border-radius: 8px;
  box-sizing: border-box;
  font-size: 18px;
  color: #555;
}

.range-select svg {
  margin-left: auto;
}

.range-select .caret {
  margin: 0 17px 0 18px;
}

.l-region {
  margin-top: 8px;
}

.label-trash {
  position: absolute;
  right: 11px;
  top: 5px;
}

.l-measure {
  margin-top: 16px;
}

.l-filter {
  margin-top: 16px;
}

.l-drill {
  margin-top: 17px;
}

.info {
  margin-left: -3px;
}

.drop {
  height: 46px;
  display: flex;
  align-items: center;
  background: #fff;
  border: 1px solid #e4e4ee;
  border-radius: 8px;
  box-sizing: border-box;
}

.drop-region {
  height: 48px;
  margin-top: 3px;
}

.drop-measure {
  margin-top: 4px;
}

.drop-empty {
  margin-top: 5px;
  padding: 5px 0 0 14px;
  font-size: 18px;
  color: #ccc;
  align-items: flex-start;
}

.drill-box {
  height: 47px;
  margin-top: 3px;
  align-items: center;
  padding: 0 0 4px 14px;
}

.chip {
  flex: 1;
  height: 35px;
  margin: 0 6px;
  display: flex;
  align-items: center;
  border-radius: 3px;
  box-sizing: border-box;
  font-size: 18px;
  padding: 0 13px 0 13px;
}

.chip-blue {
  background: #e8f0fe;
  color: #3370ff;
}

.chip-green {
  background: #eef8e8;
  border: 1px solid #e1f3d8;
  color: #67c23a;
}

.chip-text {
  margin-left: 6px;
  white-space: nowrap;
}

.chip .trash {
  margin-left: auto;
}

.chip .agg {
  margin-left: auto;
  color: #888;
}

.chip .agg + .trash {
  margin-left: 7px;
}

.chev {
  margin-left: 7px;
}

.notes {
  position: absolute;
  left: -10px;
  top: -10px;
  pointer-events: none;
}

.notes rect {
  fill: none;
  stroke: #f50000;
  stroke-width: 6.5;
}

.notes polygon {
  fill: #f50000;
}

.notes text {
  font-family: "Noto Sans CJK SC", sans-serif;
  font-size: 29.5px;
  font-weight: 900;
  fill: #f50000;
}
</style>

<style>
html,
body {
  margin: 0;
  background: #fff;
  overflow: hidden;
}
</style>
